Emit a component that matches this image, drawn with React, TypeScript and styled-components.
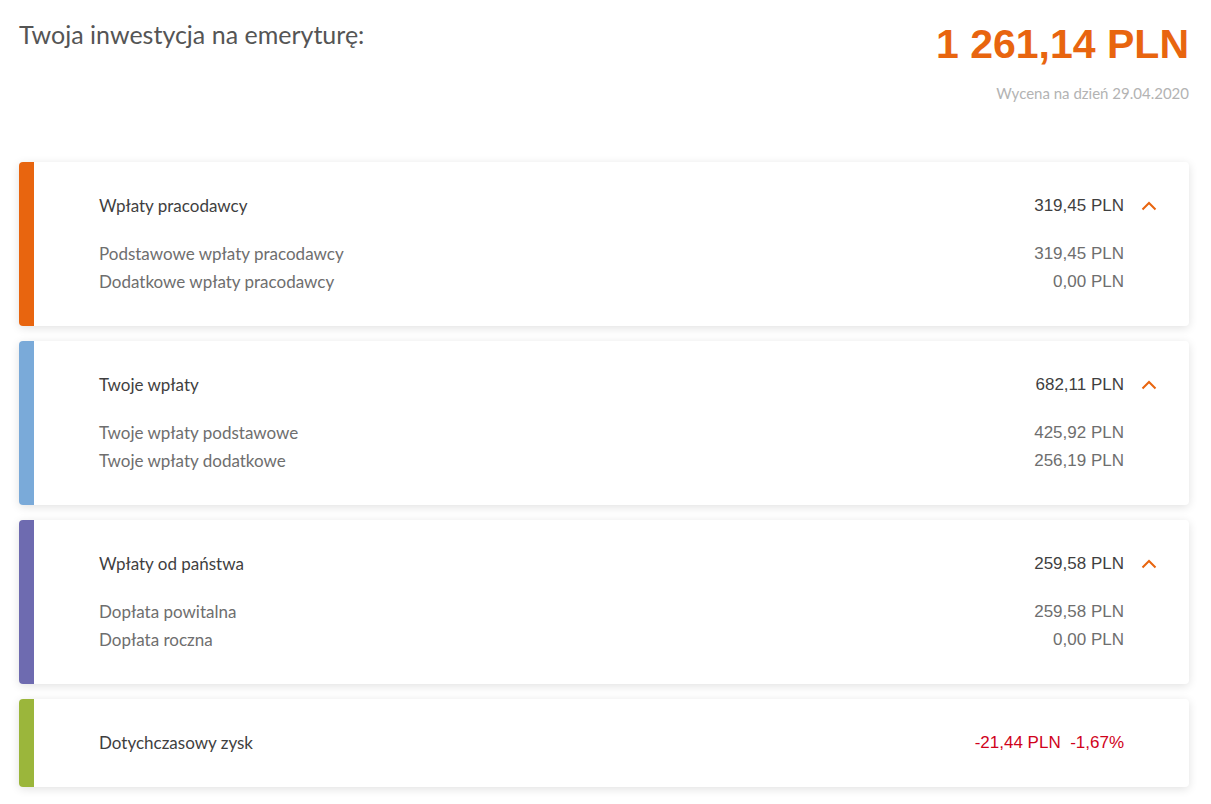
import { createGlobalStyle } from 'styled-components'
import styled from 'styled-components'
import { ReactElement } from 'react'

const GlobalStyle = createGlobalStyle`
  body {
    margin: 0;
    background: #ffffff;
    font-family: Lato, "Noto Sans", sans-serif;
  }
`

const Page = styled.div`
  padding: 18px 22px 20px 19px;
  width: 1170px;
`

const Top = styled.div`
  display: flex;
  justify-content: space-between;
  align-items: flex-start;
  margin-bottom: 60px;
`

const Title = styled.h1`
  margin: 0;
  font-size: 25px;
  font-weight: 400;
  color: #555555;
  line-height: 32px;
`

const Total = styled.div`
  display: flex;
  flex-direction: column;
  align-items: flex-end;
`

const Amount = styled.div`
  font-family: "Liberation Sans", Arial, sans-serif;
  font-weight: 700;
  font-size: 41px;
  line-height: 52px;
  color: #e8650f;
`

const Valuation = styled.div`
  margin-top: 14px;
  font-size: 15px;
  line-height: 18px;
  color: #b3b3b3;
`

const List = styled.div`
  display: flex;
  flex-direction: column;
  gap: 15px;
`

const Card = styled.section<{ $accent: string }>`
  display: flex;
  background: #ffffff;
  border-radius: 4px;
  box-shadow: 0 2px 10px rgba(0, 0, 0, 0.12);
  overflow: hidden;

  &::before {
    content: '';
    width: 15px;
    flex: none;
    background: ${({ $accent }) => $accent};
  }
`

const Body = styled.div<{ $compact?: boolean }>`
  flex: 1;
  padding: 32px 32px ${({ $compact }) => ($compact ? '32px' : '30px')} 65px;
`

const Row = styled.div<{ $head?: boolean; $last?: boolean }>`
  display: grid;
  grid-template-columns: 1fr auto 33px;
  align-items: center;
  font-size: 17px;
  line-height: ${({ $head }) => ($head ? '24px' : '28px')};
  color: ${({ $head }) => ($head ? '#3f3f3f' : '#6e6e6e')};
  margin-bottom: ${({ $head, $last }) => ($head && !$last ? '22px' : '0')};
`

const Value = styled.span<{ $negative?: boolean }>`
  font-family: "Liberation Sans", Arial, sans-serif;
  font-size: 17px;
  text-align: right;
  color: ${({ $negative }) => ($negative ? '#d0021b' : 'inherit')};
  white-space: pre;
`

const Toggle = styled.span`
  display: flex;
  justify-content: flex-end;
  color: #e8650f;
`

const Chevron = () => (
  <svg width="16" height="10" viewBox="0 0 16 10" fill="none">
    <path d="M1.5 8.5 L8 2 L14.5 8.5" stroke="currentColor" strokeWidth="2" />
  </svg>
)

type Group = {
  title: string
  total: string
  accent: string
  items: [string, string][]
}

const groups: Group[] = [
  {
    title: 'Wpłaty pracodawcy',
    total: '319,45 PLN',
    accent: '#e8650f',
    items: [
      ['Podstawowe wpłaty pracodawcy', '319,45 PLN'],
      ['Dodatkowe wpłaty pracodawcy', '0,00 PLN'],
    ],
  },
  {
    title: 'Twoje wpłaty',
    total: '682,11 PLN',
    accent: '#7aaad9',
    items: [
      ['Twoje wpłaty podstawowe', '425,92 PLN'],
      ['Twoje wpłaty dodatkowe', '256,19 PLN'],
    ],
  },
  {
    title: 'Wpłaty od państwa',
    total: '259,58 PLN',
    accent: '#6e6bb0',
    items: [
      ['Dopłata powitalna', '259,58 PLN'],
      ['Dopłata roczna', '0,00 PLN'],
    ],
  },
]

export default function App(): ReactElement {
  return (
    <>
      <GlobalStyle />
      <Page>
        <Top>
          <Title>Twoja inwestycja na emeryturę:</Title>
          <Total>
            <Amount>1 261,14 PLN</Amount>
            <Valuation>Wycena na dzień 29.04.2020</Valuation>
          </Total>
        </Top>
        <List>
          {groups.map((g) => (
            <Card key={g.title} $accent={g.accent}>
              <Body>
                <Row $head>
                  <span>{g.title}</span>
                  <Value>{g.total}</Value>
                  <Toggle>
                    <Chevron />
                  </Toggle>
                </Row>
                {g.items.map(([label, value]) => (
                  <Row key={label}>
                    <span>{label}</span>
                    <Value>{value}</Value>
                    <span />
                  </Row>
                ))}
              </Body>
            </Card>
          ))}
          <Card $accent="#9bb63b">
            <Body $compact>
              <Row $head $last>
                <span>Dotychczasowy zysk</span>
                <Value $negative>{'-21,44 PLN  -1,67%'}</Value>
                <span />
              </Row>
            </Body>
          </Card>
        </List>
      </Page>
    </>
  )
}
